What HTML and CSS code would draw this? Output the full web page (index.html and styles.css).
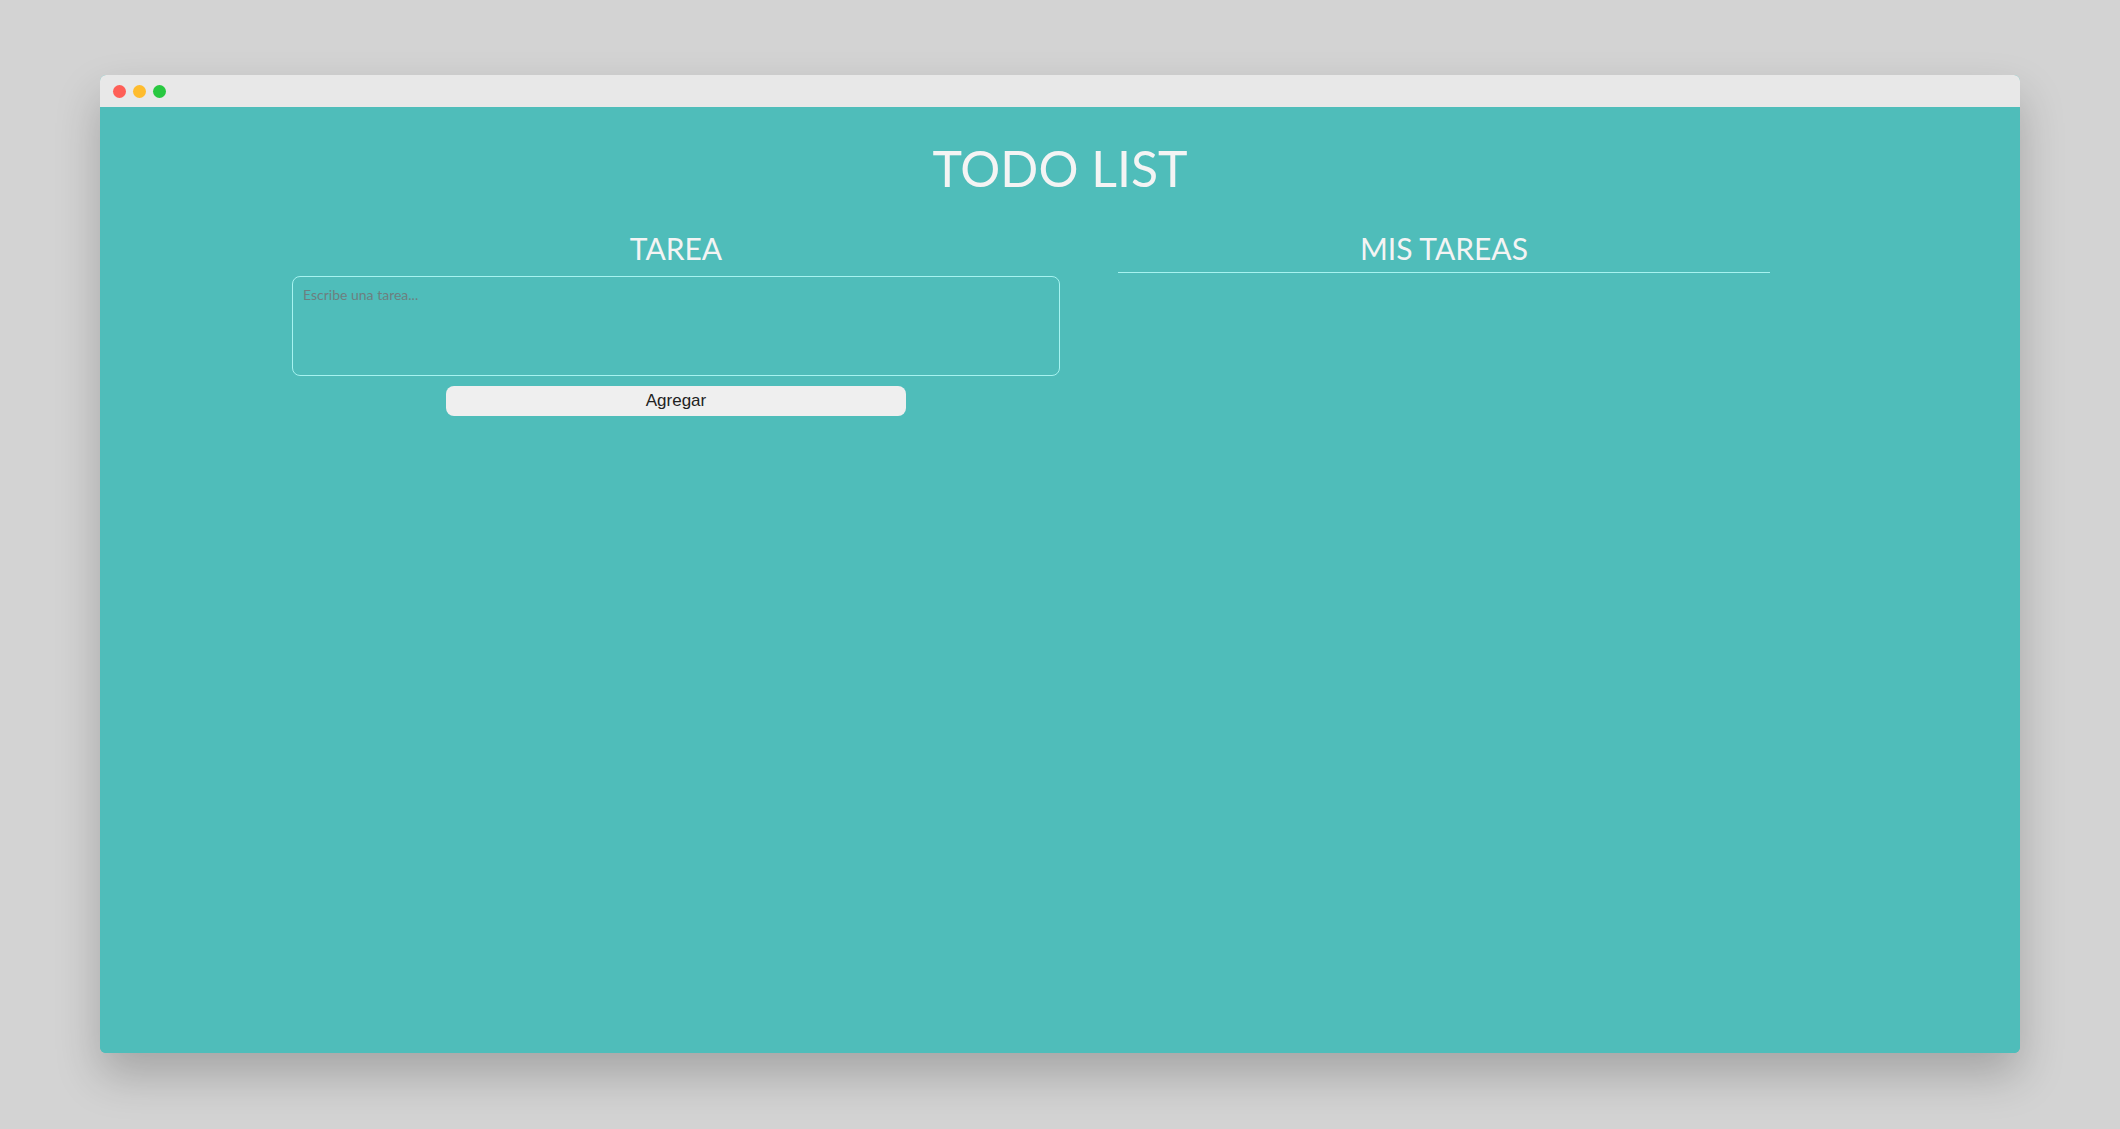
FILE: index.html
```html
<!DOCTYPE html>
<html lang="es">
<head>
<meta charset="utf-8">
<title>Todo List</title>
<link rel="stylesheet" href="styles.css">
</head>
<body>
<div class="window">
  <div class="titlebar">
    <span class="dot red"></span>
    <span class="dot yellow"></span>
    <span class="dot green"></span>
  </div>
  <main class="content">
    <h1 class="title">TODO LIST</h1>
    <div class="columns">
      <section class="col col-left">
        <h2 class="col-title">TAREA</h2>
        <textarea class="task-input" placeholder="Escribe una tarea..."></textarea>
        <button class="add-btn">Agregar</button>
      </section>
      <section class="col col-right">
        <h2 class="col-title col-title-line">MIS TAREAS</h2>
        <ul class="task-list"></ul>
      </section>
    </div>
  </main>
</div>
</body>
</html>
```

FILE: styles.css
```css
* { box-sizing: border-box; }

html, body {
  margin: 0;
  padding: 0;
  background: #d3d3d3;
  height: 100%;
}

body {
  padding: 75px 100px 76px 100px;
  font-family: Lato, "Open Sans", sans-serif;
}

.window {
  width: 1920px;
  height: 978px;
  border-radius: 6px;
  overflow: hidden;
  background: #4fbdba;
  box-shadow: 0 22px 45px rgba(0, 0, 0, 0.22);
  display: flex;
  flex-direction: column;
}

.titlebar {
  height: 32px;
  background: #e8e8e8;
  display: flex;
  align-items: center;
  gap: 7px;
  padding-left: 13px;
  flex-shrink: 0;
}

.dot {
  width: 13px;
  height: 13px;
  border-radius: 50%;
  display: block;
}
.red { background: #fe5f57; }
.yellow { background: #febc2e; }
.green { background: #28c840; }

.content {
  flex: 1;
  background: #4fbdba;
  padding-top: 31px;
}

.title {
  margin: 0;
  text-align: center;
  font-size: 50px;
  line-height: 60px;
  font-weight: 400;
  color: #f4f4f4;
}

.columns {
  display: grid;
  grid-template-columns: 1fr 1fr;
  width: 80%;
  margin: 32px auto 0;
}

.col {
  display: flex;
  flex-direction: column;
  align-items: center;
}

.col-right {
  padding: 0 58px;
}

.col-title {
  margin: 0;
  font-size: 30px;
  line-height: 36px;
  font-weight: 400;
  color: #f4f4f4;
  text-align: center;
  width: 100%;
}

.col-title-line {
  padding-bottom: 6px;
  border-bottom: 1px solid #a6f3f0;
}

.task-input {
  margin-top: 10px;
  width: 100%;
  height: 100px;
  border: 1px solid #a6f3f0;
  border-radius: 8px;
  background: transparent;
  padding: 9px 10px;
  font-family: Lato, sans-serif;
  font-size: 14px;
  color: #333;
  resize: none;
  outline: none;
}

.task-input::placeholder {
  color: #6d7f80;
}

.add-btn {
  margin-top: 10px;
  width: 60%;
  height: 30px;
  border: none;
  border-radius: 8px;
  background: #efefef;
  font-family: "Liberation Sans", Arial, sans-serif;
  font-size: 17px;
  color: #222;
  cursor: pointer;
}

.task-list {
  list-style: none;
  margin: 0;
  padding: 0;
}
```
